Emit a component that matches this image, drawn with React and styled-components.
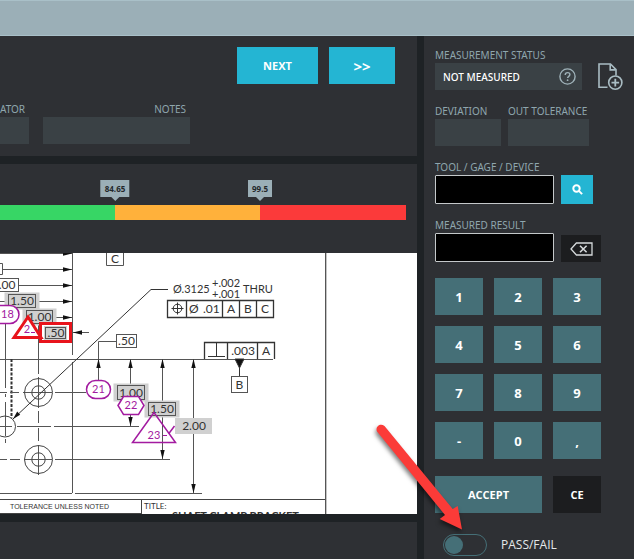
import { useState } from 'react';
import styled, { createGlobalStyle, ThemeProvider } from 'styled-components';

const theme = {
    gutter: '#1e2225',
    panel: '#2e3034',
    header: '#9bafb7',
    field: '#3a4145',
    label: '#8fa6ae',
    key: '#456f77',
    accent: '#24b5d3',
    dark: '#1c1d1f',
};

const keys = ['1', '2', '3', '4', '5', '6', '7', '8', '9', '-', '0', ','];

const ranges = [
    { name: 'good', color: '#37d665', share: 115, limit: '84.65' },
    { name: 'warning', color: '#ffb13b', share: 145, limit: '99.5' },
    { name: 'bad', color: '#fb3a3a', share: 146 },
];

const GlobalStyle = createGlobalStyle`
  * {
    box-sizing: border-box;
  }
  body {
    margin: 0;
    background: ${props => props.theme.gutter};
    font-family: 'Open Sans', 'Noto Sans', sans-serif;
    font-size: 12px;
  }
  button, input {
    font-family: inherit;
  }
`;

const Page = styled.div`
  min-height: 100vh;
  display: flex;
  flex-direction: column;
`;

const TopBar = styled.header`
  height: 36px;
  background: ${props => props.theme.header};
  border-top: 1px solid #a9c0c8;
  border-bottom: 1px solid #a9c0c8;
`;

const Columns = styled.div`
  flex: 1;
  display: flex;
  gap: 7px;
`;

const MainColumn = styled.main`
  flex: 1;
  min-width: 0;
  display: flex;
  flex-direction: column;
  gap: 8px;
`;

const Panel = styled.section`
  background: ${props => props.theme.panel};
`;

const FeaturePanel = styled(Panel)`
  padding: 11px 22px 12px 0;
`;

const FooterPanel = styled(Panel)`
  flex: 1;
`;

const ButtonRow = styled.div`
  display: flex;
  justify-content: flex-end;
  gap: 11px;
`;

const ActionButton = styled.button`
  height: 37px;
  padding: 0;
  border: none;
  color: #fff;
  font-size: ${props => props.$size || 11}px;
  font-weight: 700;
  cursor: pointer;
  background: ${props => props.theme[props.$tone]};
  ${props => props.$width && `width: ${props.$width}px;`}
`;

const FeatureFields = styled.div`
  display: flex;
  gap: 14px;
  margin-top: 16px;
`;

const Field = styled.div`
  display: flex;
  flex-direction: column;
  width: ${props => props.$width}px;
`;

const Label = styled.label`
  color: ${props => props.theme.label};
  font-family: 'Noto Sans', sans-serif;
  font-size: 10px;
  line-height: 15px;
  padding-top: 2px;
  white-space: nowrap;
  text-align: ${props => props.$align || 'left'};
  padding-right: ${props => (props.$align === 'right' ? '4px' : 0)};
`;

const ReadOnlyInput = styled.input`
  width: 100%;
  height: 27px;
  padding: 0 8px;
  border: none;
  outline: none;
  background: ${props => props.theme.field};
  color: #fff;
  font-family: 'Noto Sans', sans-serif;
  font-size: 10px;
  font-weight: 500;
`;

const EntryInput = styled.input`
  width: 119px;
  height: 29px;
  padding: 0 6px;
  border: 1px solid #c4c8ca;
  border-radius: 1px;
  outline: none;
  background: #000;
  color: #fff;
  font-size: 12px;
`;

const GaugePanel = styled(Panel)`
  height: 89px;
  padding: 41px 11px 0 0;
`;

const GaugeBar = styled.div`
  display: flex;
  height: 15px;
`;

const GaugeRange = styled.div`
  position: relative;
  flex: ${props => props.$share};
  background: ${props => props.$color};
`;

const LimitTag = styled.span`
  position: absolute;
  right: 0;
  bottom: 23px;
  transform: translateX(50%);
  padding: 0 4px;
  background: ${props => props.theme.header};
  color: #23282b;
  font-size: 8px;
  font-weight: 700;
  line-height: 17px;
  &::after {
    content: '';
    position: absolute;
    left: 50%;
    top: 100%;
    margin-left: -4px;
    border: 4px solid transparent;
    border-top-color: ${props => props.theme.header};
    border-bottom: none;
  }
`;

const DrawingGroup = styled.div`
  display: flex;
  flex-direction: column;
`;

const Sheet = styled.div`
  background: #fff;
  height: 261px;
  overflow: hidden;
  svg {
    display: block;
  }
`;

const SidePanel = styled(Panel).attrs({ as: 'aside' })`
  position: relative;
  width: 210px;
  padding: 10px 10px 3px 11px;
  display: flex;
  flex-direction: column;
`;

const FieldStack = styled.div`
  display: flex;
  flex-direction: column;
  gap: 12px;
`;

const FieldRow = styled.div`
  display: flex;
  gap: ${props => props.$gap || 7}px;
  align-items: flex-end;
`;

const InputWithIcon = styled.div`
  position: relative;
  button {
    position: absolute;
    right: 6px;
    top: 5px;
  }
`;

const IconButton = styled.button`
  display: flex;
  align-items: center;
  justify-content: center;
  padding: 0;
  border: none;
  background: none;
  cursor: pointer;
`;

const SquareIconButton = styled(IconButton)`
  width: ${props => props.$width}px;
  height: ${props => props.$height}px;
  background: ${props => props.theme[props.$tone]};
`;

const Keypad = styled.div`
  display: grid;
  grid-template-columns: repeat(3, 48px);
  gap: 11px;
  margin-top: 16px;
`;

const ConfirmRow = styled.div`
  display: flex;
  gap: 11px;
  margin-top: 17px;
`;

const SwitchRow = styled.label`
  display: flex;
  align-items: center;
  gap: 14px;
  margin: 21px 0 0 8px;
  color: #e4e8ea;
  font-size: 12px;
  line-height: 22px;
`;

const Switch = styled.input`
  appearance: none;
  width: 44px;
  height: 22px;
  margin: 0;
  padding: 1px;
  border: 1px solid ${props => props.theme.key};
  border-radius: 11px;
  cursor: pointer;
  &::before {
    content: '';
    display: block;
    width: 18px;
    height: 18px;
    border-radius: 50%;
    background: ${props => props.theme.key};
  }
  &:checked::before {
    margin-left: 22px;
  }
`;

const Pointer = styled.svg`
  position: absolute;
  left: -54px;
  top: 384px;
  pointer-events: none;
`;

const HelpIcon = () => (
    <svg width="17" height="17" viewBox="0 0 17 17" fill="none" stroke="#9fb2b9">
        <circle cx="8.5" cy="8.5" r="7.6" strokeWidth="1.4" />
        <path d="M6.2 6.9c0-1.4 1-2.3 2.4-2.3s2.3.8 2.3 2c0 1.7-2.3 1.8-2.3 3.5" strokeWidth="1.4" />
        <circle cx="8.6" cy="12.2" r=".9" fill="#9fb2b9" stroke="none" />
    </svg>
);

const AddNoteIcon = () => (
    <svg width="25" height="27" viewBox="0 0 25 27" fill="none" stroke="#a9bcc3" strokeWidth="1.6">
        <path d="M9.500 24.200H1V1H12.500L18 6.600V12.500" />
        <path d="M12.200 1.300V6.900H17.800" />
        <circle cx="17.300" cy="19.600" r="6.600" />
        <path d="M17.300 15.800V23.400M13.500 19.600H21.100" strokeWidth="1.800" />
    </svg>
);

const SearchIcon = () => (
    <svg width="11" height="11" viewBox="0 0 11 11" fill="none" stroke="#fff" strokeWidth="2">
        <circle cx="4.5" cy="4.5" r="3.2" />
        <path d="M6.9 6.9l3.2 3.2" />
    </svg>
);

const BackspaceIcon = () => (
    <svg width="23" height="14" viewBox="0 0 23 14" fill="none" stroke="#d5d9db" strokeWidth="1.3">
        <path d="M1 7L6.400 1H22V13H6.400Z" />
        <path d="M10 3.800L16.600 10.200M16.600 3.800L10 10.200" strokeWidth="1.600" />
    </svg>
);

const BoxedText = ({ x, y, w, h, children, shaded }) => (
    <g>
        {shaded && <rect x={x - 4} y={y - 2} width={w + 8} height={h + 4} fill="#d0d0d0" stroke="none" />}
        <rect x={x} y={y} width={w} height={h} fill={shaded ? 'none' : '#fff'} />
        <text x={x + w / 2} y={y + h / 2 + 4} textAnchor="middle">{children}</text>
    </g>
);

// dir: right, left, up or down, the tip is at x, y
const arrowAngles = { right: 0, down: 90, left: 180, up: 270 };

const ArrowHead = ({ x, y, dir }) => (
    <path
        d="M0 0L-9 -2.200V2.200Z"
        transform={`translate(${x} ${y}) rotate(${arrowAngles[dir]})`}
        fill="#111"
        stroke="none"
    />
);

const Blueprint = () => (
    <Sheet>
        <svg width="417" height="261" viewBox="0 253 417 261" role="img" aria-label="Part drawing">
            <style>{`
                .bp text { fill: #333; stroke: none; font-family: Lato, sans-serif; font-size: 12px; }
                .bp .callout text { font-size: 11px; }
                .bp .tag text { fill: #a31ba0; font-size: 11px; }
            `}</style>
            <g className="bp" fill="none" stroke="#555" strokeWidth="1">
                <path d="M72.500 252V355M72.500 362V493M0 359.500H273M325.500 252V514" />
                <path d="M326.500 252V514" stroke="#c4c4c4" />
                <path d="M0 253.500H72M2 269.500H72M19 285.500H72M0 301.500H72M53 317.500H72M73 332.500H89" />
                {[253.5, 269.5, 285.5, 301.5, 317.5].map(y => (
                    <ArrowHead key={y} x={72} y={y} dir="right" />
                ))}
                <ArrowHead x={73} y={332.5} dir="left" />

                <path d="M5.500 323V388M5.500 394V397M5.500 402V436M5.500 439V443M38.500 322V374M38.500 377V408M38.500 411V423M38.500 428V441M38.500 445V475" />
                <path d="M11.500 359V418" stroke="#333" strokeWidth="2" strokeDasharray="3 1.500" />
                <path d="M0 392.500H7M10 392.500H19M23 392.500H52M55 392.500H86M0 426.500H12M17 426.500H51M54 426.500H139" />
                <path d="M0 459.500H7M10 459.500H20M24 459.500H52M55 459.500H170M0 493.500H72M75 493.500H202" />
                <g stroke="#444">
                    <circle cx="38.500" cy="392.500" r="14" />
                    <circle cx="38.500" cy="392.500" r="6.700" />
                    <circle cx="38.500" cy="459.500" r="14" />
                    <circle cx="38.500" cy="459.500" r="6.700" />
                    <circle cx="5" cy="426.500" r="10.500" />
                </g>
                <path d="M168 289.500H151L13 419" stroke="#333" />
                <path d="M13 419L17.200 411.500L20.200 414.700Z" fill="#111" stroke="none" />

                <path d="M116 341.500H98.500V381M130.500 359V426M162.500 359V459M193.500 359V493" />
                <ArrowHead x={98.5} y={359} dir="up" />
                <ArrowHead x={130.5} y={359} dir="up" />
                <ArrowHead x={162.5} y={359} dir="up" />
                <ArrowHead x={193.5} y={359} dir="up" />
                <ArrowHead x={130.5} y={426} dir="down" />
                <ArrowHead x={162.5} y={459} dir="down" />
                <ArrowHead x={193.5} y={493} dir="down" />

                <path d="M0 263.500H2.500V274.500H0" />
                <path d="M106.500 253V265.500H123.500V253" />
                <text x="115" y="263" textAnchor="middle">C</text>
                <BoxedText x={-4.5} y={278.5} w={23} h={13}>.00</BoxedText>
                <BoxedText x={8.5} y={294.5} w={27} h={13} shaded>1.50</BoxedText>
                <BoxedText x={26.5} y={310.5} w={26} h={13} shaded>1.00</BoxedText>
                <BoxedText x={116.5} y={334.5} w={20} h={13}>.50</BoxedText>
                <BoxedText x={117.5} y={385.5} w={27} h={14} shaded>1.00</BoxedText>
                <BoxedText x={148.5} y={402.5} w={27} h={13} shaded>1.50</BoxedText>
                <rect x="175" y="418" width="37" height="16" fill="#d0d0d0" stroke="none" />
                <text x="194" y="430" textAnchor="middle">2.00</text>

                <rect x="40.500" y="323.500" width="30" height="18" fill="#fff" stroke="#e8141c" strokeWidth="3" />
                <rect x="44" y="326" width="23" height="14" fill="#d0d0d0" stroke="none" />
                <rect x="45.500" y="327.500" width="20" height="11" />
                <text x="56" y="337" textAnchor="middle">.50</text>

                <g className="tag" stroke="#a31ba0" strokeWidth="1.500">
                    <rect x="-8" y="305.500" width="27" height="18" rx="9" fill="#fff" />
                    <text x="7.500" y="318" textAnchor="middle">18</text>
                    <path d="M28 317L14 337.500H41Z" fill="#fff" stroke="#e8141c" strokeWidth="3" />
                    <text x="27" y="333" textAnchor="middle">2</text>
                    <path d="M31 332.500H35" strokeWidth="1" />
                    <rect x="86.500" y="380.500" width="24" height="18" rx="9" fill="#fff" />
                    <text x="98.500" y="393" textAnchor="middle">21</text>
                    <path d="M118 405.500L123.500 396.500H138.500L144 405.500L138.500 414.500H123.500Z" fill="#fff" />
                    <text x="131" y="409" textAnchor="middle">22</text>
                    <path d="M154 412.500L132.500 442.500H175.500ZM174.500 426L168.500 434" />
                    <path d="M163 435.500H167" strokeWidth="1" />
                    <text x="154" y="439" textAnchor="middle">23</text>
                </g>

                <g className="callout">
                    <text x="173" y="293">Ø.3125</text>
                    <text x="212" y="287">+.002</text>
                    <text x="212" y="298">+.001</text>
                    <text x="243" y="293">THRU</text>
                </g>
                <g stroke="#333">
                    <path d="M167.500 300.500H273.500V317.500H167.500ZM186.500 300V317M222.500 300V317M239.500 300V317M256.500 300V317" strokeWidth="1.300" />
                    <circle cx="177.500" cy="308.500" r="4.300" />
                    <path d="M171.500 308.500H183.500M177.500 302.500V314.500" />
                    <path d="M204.500 359V342.500H274.500V359M227.500 342V359M257.500 342V359" strokeWidth="1.300" />
                    <path d="M216.500 343V356M208 356.500H225" />
                    <path d="M235 359H244L239.500 368Z" fill="#111" />
                    <path d="M239.500 368V376" />
                </g>
                <text x="189" y="313">Ø</text>
                <text x="203" y="313">.01</text>
                <text x="231" y="313" textAnchor="middle">A</text>
                <text x="248" y="313" textAnchor="middle">B</text>
                <text x="265" y="313" textAnchor="middle">C</text>
                <text x="243" y="355" textAnchor="middle">.003</text>
                <text x="266" y="355" textAnchor="middle">A</text>
                <BoxedText x={231.5} y={376.5} w={16} h={16}>B</BoxedText>

                <path d="M0 499.500H325M0 513.500H141M141.500 499V514" stroke="#444" />
                <text x="10" y="509" style={{ fontFamily: 'Liberation Sans', fontSize: 7 }}>TOLERANCE UNLESS NOTED</text>
                <text x="144" y="509" style={{ fontSize: 8 }}>TITLE:</text>
                <text x="172" y="520" style={{ fontSize: 11, fontWeight: 700 }}>SHAFT CLAMP BRACKET</text>
            </g>
        </svg>
    </Sheet>
);

const App = () => {
    const [result, setResult] = useState('');
    const [tool, setTool] = useState('');
    const [passFail, setPassFail] = useState(false);

    return (
        <ThemeProvider theme={theme}>
            <GlobalStyle />
            <Page>
                <TopBar />
                <Columns>
                    <MainColumn>
                        <FeaturePanel>
                            <ButtonRow>
                                <ActionButton $tone="accent" $width={81}>NEXT</ActionButton>
                                <ActionButton $tone="accent" $width={66} $size={15}>&gt;&gt;</ActionButton>
                            </ButtonRow>
                            <FeatureFields>
                                <Field $width={29}>
                                    <Label htmlFor="indicator" $align="right">ATOR</Label>
                                    <ReadOnlyInput id="indicator" readOnly />
                                </Field>
                                <Field $width={147}>
                                    <Label htmlFor="notes" $align="right">NOTES</Label>
                                    <ReadOnlyInput id="notes" readOnly />
                                </Field>
                            </FeatureFields>
                        </FeaturePanel>
                        <DrawingGroup>
                            <GaugePanel>
                                <GaugeBar>
                                    {ranges.map(range => (
                                        <GaugeRange key={range.name} $share={range.share} $color={range.color}>
                                            {range.limit && <LimitTag>{range.limit}</LimitTag>}
                                        </GaugeRange>
                                    ))}
                                </GaugeBar>
                            </GaugePanel>
                            <Blueprint />
                        </DrawingGroup>
                        <FooterPanel />
                    </MainColumn>

                    <SidePanel>
                        <FieldStack>
                            <FieldRow $gap={16}>
                                <Field $width={147}>
                                    <Label htmlFor="status">MEASUREMENT STATUS</Label>
                                    <InputWithIcon>
                                        <ReadOnlyInput id="status" value="NOT MEASURED" readOnly />
                                        <IconButton aria-label="Help"><HelpIcon /></IconButton>
                                    </InputWithIcon>
                                </Field>
                                <IconButton aria-label="Add note"><AddNoteIcon /></IconButton>
                            </FieldRow>
                            <FieldRow>
                                <Field $width={66}>
                                    <Label htmlFor="deviation">DEVIATION</Label>
                                    <ReadOnlyInput id="deviation" readOnly />
                                </Field>
                                <Field $width={81}>
                                    <Label htmlFor="out">OUT TOLERANCE</Label>
                                    <ReadOnlyInput id="out" readOnly />
                                </Field>
                            </FieldRow>
                            <FieldRow>
                                <Field $width={119}>
                                    <Label htmlFor="tool">TOOL / GAGE / DEVICE</Label>
                                    <EntryInput id="tool" value={tool} onChange={e => setTool(e.target.value)} />
                                </Field>
                                <SquareIconButton $tone="accent" $width={32} $height={29} aria-label="Search">
                                    <SearchIcon />
                                </SquareIconButton>
                            </FieldRow>
                            <FieldRow>
                                <Field $width={119}>
                                    <Label htmlFor="result">MEASURED RESULT</Label>
                                    <EntryInput id="result" value={result} onChange={e => setResult(e.target.value)} />
                                </Field>
                                <SquareIconButton
                                    $tone="dark"
                                    $width={40}
                                    $height={27}
                                    aria-label="Backspace"
                                    onClick={() => setResult(v => v.slice(0, -1))}
                                >
                                    <BackspaceIcon />
                                </SquareIconButton>
                            </FieldRow>
                        </FieldStack>

                        <Keypad>
                            {keys.map(key => (
                                <ActionButton
                                    key={key}
                                    $tone="key"
                                    $size={13}
                                    onClick={() => setResult(v => v + key)}
                                >
                                    {key}
                                </ActionButton>
                            ))}
                        </Keypad>
                        <ConfirmRow>
                            <ActionButton $tone="key" $width={107}>ACCEPT</ActionButton>
                            <ActionButton $tone="dark" $width={48} onClick={() => setResult('')}>CE</ActionButton>
                        </ConfirmRow>
                        <SwitchRow>
                            <Switch
                                type="checkbox"
                                checked={passFail}
                                onChange={e => setPassFail(e.target.checked)}
                            />
                            PASS/FAIL
                        </SwitchRow>

                        <Pointer width="100" height="118" viewBox="370 420 100 118">
                            <path
                                d="M377 431.500C375 427 380 422.500 384.500 426L452.700 509L457.700 506L462 529.500L439.700 519L445 515Z"
                                fill="#fb3b38"
                                style={{ filter: 'drop-shadow(-1px 3px 2px rgba(0, 0, 0, 0.5))' }}
                            />
                        </Pointer>
                    </SidePanel>
                </Columns>
            </Page>
        </ThemeProvider>
    );
};

export default App;
